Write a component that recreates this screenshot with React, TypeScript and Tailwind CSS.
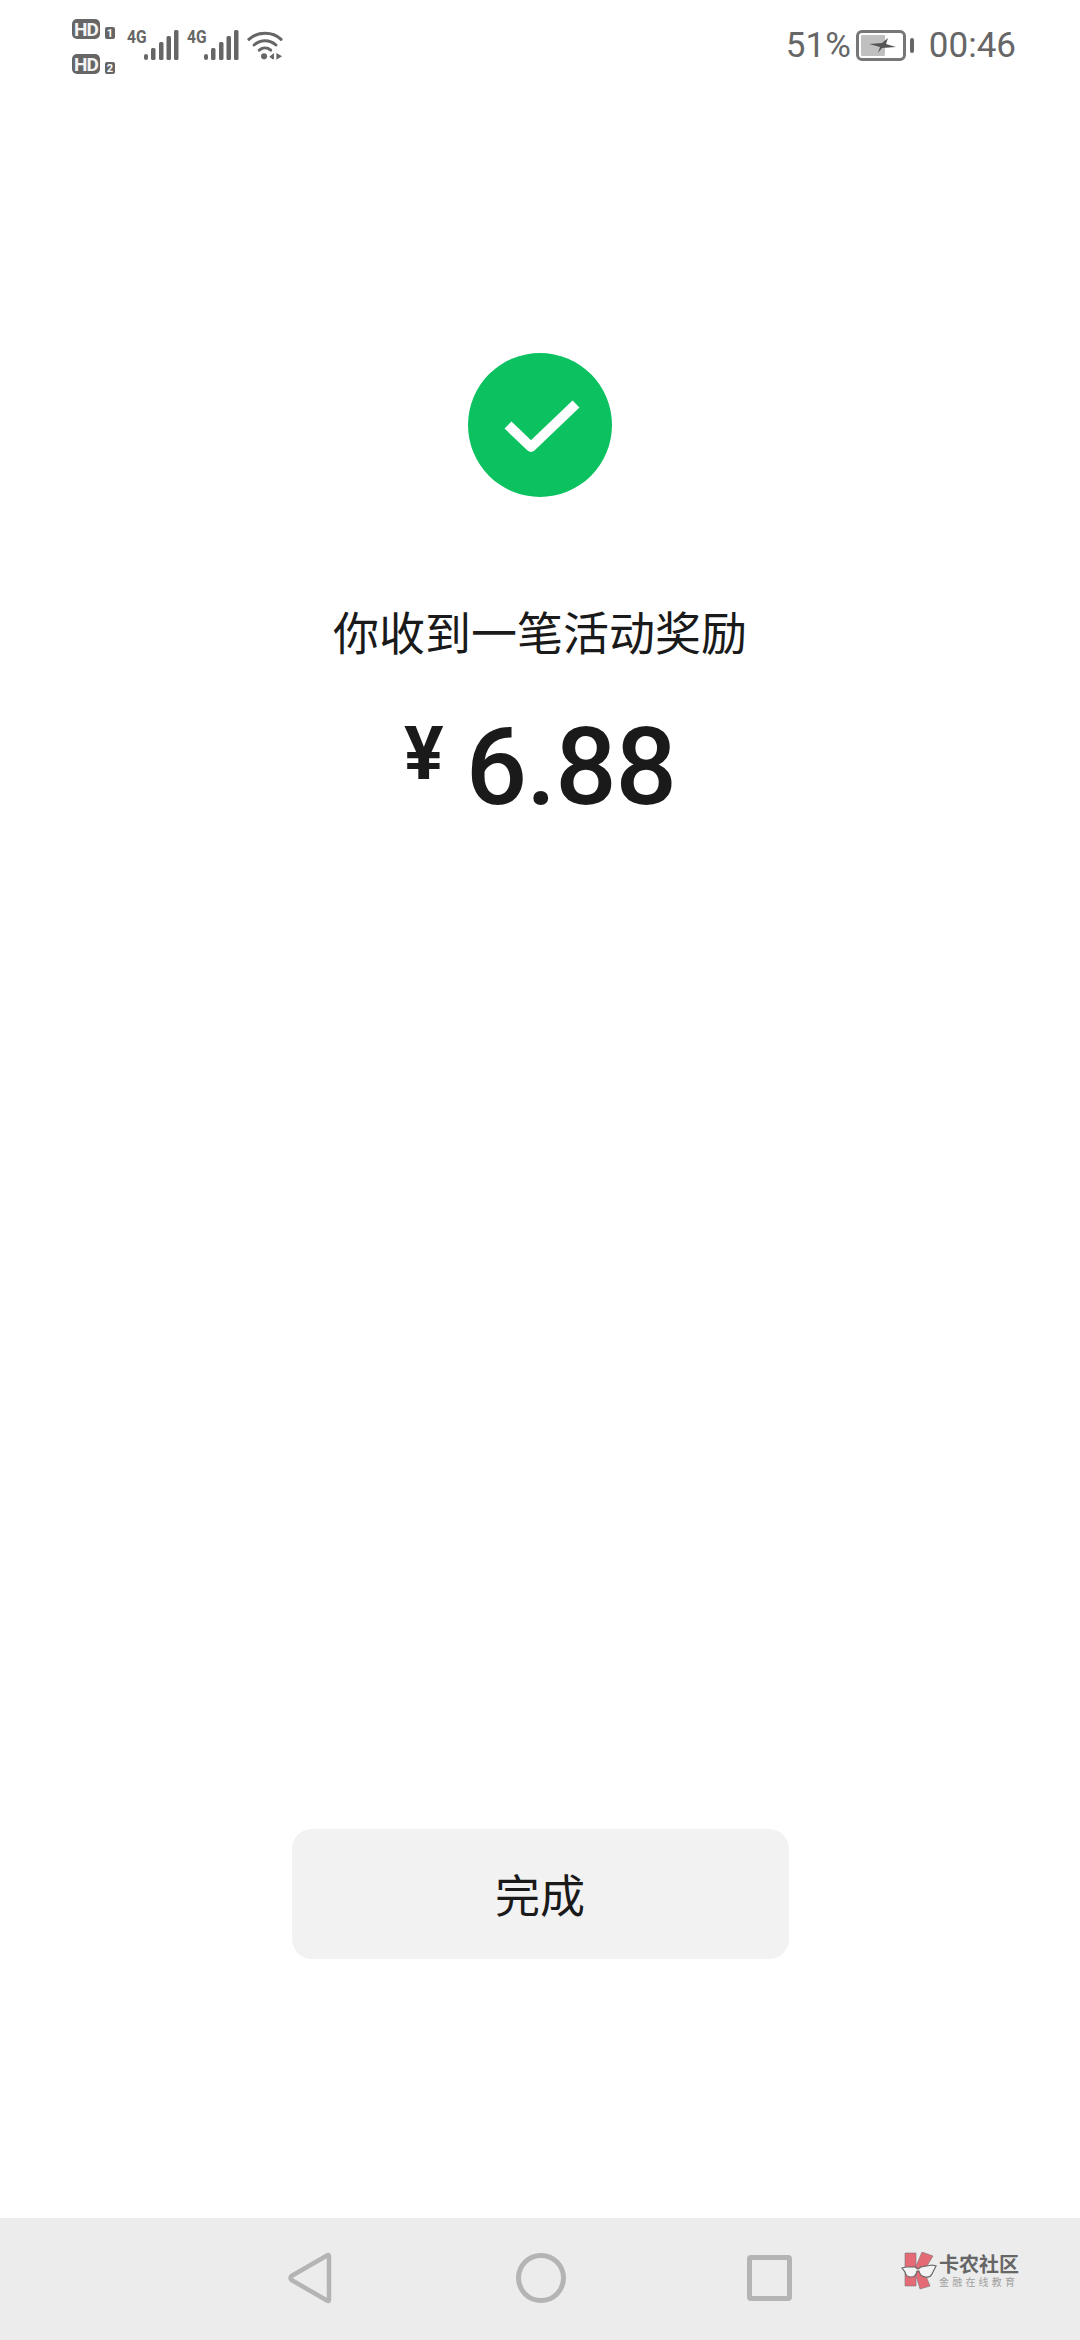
const cjk = { fontFamily: '"Noto Sans CJK SC", sans-serif' };

function SimBadge({ label, n }: { label: string; n: string }) {
  return (
    <div className="flex items-end gap-[5px]">
      <div className="flex h-[20px] w-[28px] items-center justify-center rounded-[5px] bg-[#666666] text-[19px] leading-none font-bold tracking-[-1px] text-[#f4f4f4]">
        {label}
      </div>
      <div className="flex h-[12px] w-[10px] items-center justify-center rounded-[2px] bg-[#666666] text-[11px] leading-none font-bold text-white">
        {n}
      </div>
    </div>
  );
}

function Signal() {
  return (
    <div className="flex items-start">
      <span className="mt-[1px] w-[18px] origin-left scale-x-[0.82] text-[19px] leading-[14px] font-bold text-[#666666]">
        4G
      </span>
      <svg width="36" height="32" viewBox="0 0 36 32" fill="#666666" className="-ml-[2px]">
        <rect x="1" y="25" width="4" height="6" rx="2" />
        <rect x="8" y="19" width="4.5" height="12" rx="1.5" />
        <rect x="16" y="13" width="4.5" height="18" rx="1.5" />
        <rect x="23.5" y="7" width="4.5" height="24" rx="1.5" />
        <rect x="31" y="1" width="4.5" height="30" rx="1.5" />
      </svg>
    </div>
  );
}

function Wifi() {
  return (
    <svg width="36" height="32" viewBox="0 0 38 32" fill="none">
      <path d="M2 10C11 1.500 27 1.500 36 10" stroke="#666666" strokeWidth="3.200" strokeLinecap="round" />
      <path d="M7.500 16C14 10 24 10 30.500 16" stroke="#666666" strokeWidth="3.200" strokeLinecap="round" />
      <path d="M13 21.500C16.500 18.500 21.500 18.500 25 21.500" stroke="#666666" strokeWidth="3.200" strokeLinecap="round" />
      <circle cx="18" cy="28" r="3.200" fill="#666666" />
      <path d="M28.500 24.500V31H27L23.500 28.500Z" fill="#666666" />
      <path d="M31 24.500L37 28L31 31.500Z" fill="#666666" />
    </svg>
  );
}

function Battery() {
  return (
    <div className="flex items-center gap-[4px]">
      <div className="relative h-[31px] w-[50px] rounded-[6px] border-[3px] border-[#777777] p-[2px]">
        <div className="h-full w-[60%] rounded-[1px] bg-[#c0c0c0]" />
        <svg width="27" height="15" viewBox="0 0 27 15" className="absolute top-[5px] left-[10px]" fill="#555555">
          <path d="M0 6L13 5L19 0L17 6L27 9L13 10L9 15L11 9Z" />
        </svg>
      </div>
      <div className="h-[15px] w-[4px] rounded-[2px] bg-[#666666]" />
    </div>
  );
}

function StatusBar() {
  return (
    <div className="flex h-[76px] shrink-0 items-start justify-between pt-[19px] pr-[64px] pl-[72px]">
      <div className="flex items-start gap-[12px]">
        <div className="flex flex-col gap-[15px]">
          <SimBadge label="HD" n="1" />
          <SimBadge label="HD" n="2" />
        </div>
        <div className="mt-[10px] flex gap-[8px]">
          <Signal />
          <Signal />
          <Wifi />
        </div>
      </div>
      <div className="mt-[11px] flex items-center gap-[5px] text-[35px] leading-[31px] text-[#666666]">
        <span>51%</span>
        <Battery />
        <span className="ml-[10px]">00:46</span>
      </div>
    </div>
  );
}

function Logo() {
  return (
    <div className="absolute top-[34px] left-[901px] flex items-start gap-[2px]">
      <svg width="36" height="38" viewBox="0 0 36 38">
        <path d="M4 1H15V34H4Z" fill="#e46a76" stroke="#777777" strokeWidth="0.600" />
        <path d="M15 14L21 0L32 4L23 19L29 34L19 37L15 24Z" fill="#e46a76" stroke="#777777" strokeWidth="0.600" />
        <path d="M1 16L5 15H14L17 17L20 15L31 13L35 14L31 22Q29 26 24 25Q19 24 18 19L16 19Q15 25 10 25Q5 25 4 20Z" fill="#f4f4f4" stroke="#666666" strokeWidth="1.200" />
      </svg>
      <div className="flex flex-col">
        <span className="text-[20px] leading-[23px] font-bold text-[#666666]">卡农社区</span>
        <span className="mt-[1px] text-[10px] leading-[12px] tracking-[3.200px] text-[#a0a0a0]">金融在线教育</span>
      </div>
    </div>
  );
}

function NavBar() {
  return (
    <div className="relative flex h-[122px] shrink-0 items-start bg-[#ececec] pt-[34px]" style={cjk}>
      <div className="flex w-full items-center justify-center">
        <svg width="44" height="52" viewBox="0 0 44 52" fill="none" className="mr-[184px]">
          <path d="M41 4.500Q41 2 39 3.500L3.500 24Q1.500 26 3.500 28L39 48.500Q41 50 41 47.500Z" stroke="#b4b4b4" strokeWidth="4.500" strokeLinejoin="round" />
        </svg>
        <div className="mr-[181px] h-[50px] w-[50px] rounded-full border-[5px] border-[#b4b4b4]" />
        <div className="h-[46px] w-[45px] rounded-[4px] border-[5px] border-[#b4b4b4]" />
      </div>
      <Logo />
    </div>
  );
}

export default function App() {
  return (
    <div className="flex h-[2340px] w-[1080px] flex-col overflow-hidden bg-white" style={{ fontFamily: 'Roboto, sans-serif' }}>
      <StatusBar />
      <div className="flex flex-1 flex-col items-center pt-[277px] pb-[259px]">
        <div className="flex h-[144px] w-[144px] items-center justify-center rounded-full bg-[#0bc160]">
          <svg width="80" height="60" viewBox="0 0 80 60" fill="none">
            <path d="M8 30L31 52L76 9" stroke="white" strokeWidth="10" strokeLinejoin="round" />
          </svg>
        </div>
        <p className="mt-[103px] text-[46px] leading-[60px] text-[#1a1a1a]" style={cjk}>
          你收到一笔活动奖励
        </p>
        <div className="mt-[52px] flex items-start text-[#1a1a1a]">
          <span className="mr-[22px] text-[74px] leading-[84px] font-bold">¥</span>
          <span className="text-[108px] leading-[110px] font-medium tracking-[-1px]">6.88</span>
        </div>
        <button className="mt-auto flex h-[130px] w-[497px] items-center justify-center rounded-[20px] bg-[#f2f2f2] text-[45px] text-[#1a1a1a]" style={cjk}>
          完成
        </button>
      </div>
      <NavBar />
    </div>
  );
}
